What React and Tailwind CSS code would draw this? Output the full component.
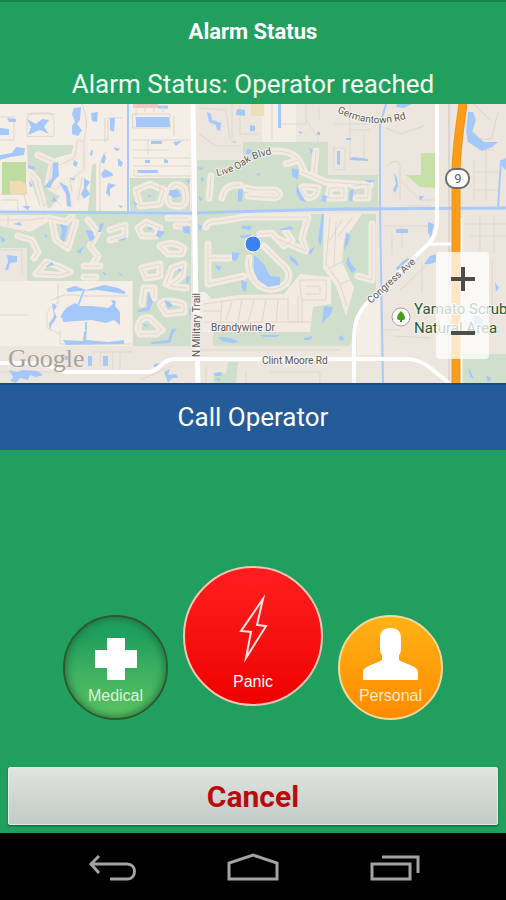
import React from "react";

const parks = [
  "27,145 75,145 75,153 62,156 50,160 56,178 48,190 60,196 50,208 40,207 28,172",
  "92,165 96,163 96,211 88,211",
  "130,178 190,178 190,211 130,211",
  "0,214 130,214 191,214 191,346 133,346 133,281 27,281 27,248 0,248",
  "197,160 243,160 243,142 328,142 328,175 378,175 378,211 197,211",
  "197,214 376,214 376,290 362,310 350,346 213,346 213,300 205,292 197,292",
  "228,362 238,362 236,383 214,383 214,373 226,373",
  "461,354 506,354 506,383 461,383",
  "340,318 351,322 348,346 340,346",
];

// built-up areas inside the parks
const blocks = [
  "202,300 240,295 284,294 300,274 331,277 331,304 313,307 310,332 202,332",
  "324,214 362,214 344,240 342,262 354,288 346,316 336,286 323,268",
  "0,215 46,215 48,222 30,232 20,230 0,226",
];

// streets that run through the green parts, drawn as a wide casing with a thin centre
const streets = [
  "M38 155 L60 165 L74 158 L78 140 L84 142 L84 170 L70 180 L72 192",
  "M30 172 L37 180 L44 206",
  "M52 165 L48 185 L56 190 L62 182 L72 206",
  "M82 178 L78 200",
  "M136 190 L140 206 L160 204 L164 190 L150 184 L136 190",
  "M168 196 Q172 178 184 188 Q190 208 176 206 Q166 206 168 196",
  "M18 236 L32 240 L38 252 L34 258 M48 218 L66 222 L72 216 M52 222 L56 240 L68 248 L76 222",
  "M88 220 L98 232 L90 246 L98 256 L94 262",
  "M110 230 L125 225 V236 L110 240",
  "M138 228 L146 222 L160 228 L156 236 L142 236 Z",
  "M168 218 H188 M176 226 H188",
  "M36 274 L46 262 L58 266 L70 272 L60 275 L38 274",
  "M84 266 H100 M84 277 H96",
  "M160 246 Q172 240 184 248 L182 254 L168 254 Z",
  "M142 268 L160 264 L160 276 L146 278 Z",
  "M166 284 L172 268 L184 264 L182 276 L170 286 L186 288",
  "M142 304 L144 288 L154 288 L154 298",
  "M160 304 Q164 298 184 304 L184 312 L166 314 Z",
  "M138 330 Q138 316 150 318 L162 330 L156 334 L140 334",
  "M211 176 L209 198",
  "M222 198 Q224 184 240 185",
  "M246 188 L256 190 L276 190 Q284 196 274 198 L248 196",
  "M272 151 Q294 150 300 162 L304 170 M286 164 L298 160",
  "M316 151 L314 172 M302 172 L326 182 L370 185",
  "M302 192 Q298 186 308 187 L318 188 Q316 200 306 197 Z",
  "M330 188 H344 V198 H328 Z",
  "M354 186 L368 184 V198 H356",
  "M206 227 Q206 221 220 221 L245 217 L308 217 L302 238 L306 251 L294 246 L276 238",
  "M260 234 L272 233 L284 246 L292 240 L286 232",
  "M208 244 V284 L244 276 M208 258 H230",
  "M249 258 Q246 272 258 285 Q272 294 286 284 Q294 272 280 262 L264 246",
  "M372 224 V280 L358 276",
];

const lanes = [
  "M0 117 H14 V140 H0 M28 114 H54 M27 136 V118 Q28 112 40 113 H50 Q54 114 54 124 V136 Z",
  "M82 104 Q90 120 84 140 M105 118 V142 M90 140 H108 V118 H122 M106 152 Q98 160 100 178 V211",
  "M133 114 H170 V128 H133 Z M133 140 H190 M133 150 H168 M134 158 H190 M134 166 H190 M136 120 V104 M145 112 V106 M154 112 V106 M163 112 V106",
  "M148 140 V154 M174 116 V136 M134 170 V176 H190 M160 178 V192",
  "M0 194 L24 194 L28 211 M2 200 H18 V211 M44 206 L52 196 L62 206",
  "M58 284 V304 M48 310 L58 302 M47 312 V328 L60 334 M60 330 V344 H130 M52 300 Q64 292 82 296 H128",
  "M0 315 H27 M0 250 H22 V274 M100 352 V366 M113 352 V370 M120 352 V370 M92 352 H132",
  "M0 220 H30 L44 218 M8 214 V226",
  "M199 134 L216 146 H240 M199 108 L226 110 L230 140 M232 104 V142 M240 106 V134 H258 M272 104 V140 M280 104 V124 H306 V104 M306 120 L318 138 M319 106 V120",
  "M318 144 V140 M334 148 H345 V170 H334 Z M350 104 V130 H370 M334 124 H378 M350 130 V158 M364 134 V158",
  "M386 128 L400 134 L424 126 M388 165 Q394 158 400 164 V200 M400 180 L420 200 H436 M408 206 H430",
  "M470 128 Q480 144 492 138 L498 112 M474 104 L490 120 M478 150 H494 M474 160 V200 M486 150 V200 M474 172 H498 M474 190 H498",
  "M384 226 H436 M392 234 V254 M402 226 V248 M466 224 H506 M480 216 V252 M494 216 V252 M470 236 H506 M492 260 V320",
  "M330 218 L326 264 L340 284 L347 306 M336 222 L334 266 M342 220 L330 240 M352 218 L338 236 M330 268 L342 262 M340 284 L350 280",
  "M400 290 L430 262 M422 262 V292 M384 330 H400 M394 336 L430 338",
  "M200 350 H340 M270 372 H320 V383 M206 366 V383 M246 372 V383 M0 372 H60 M140 380 L172 366",
  "M204 304 L240 299 L286 299 M204 311 H220 M222 302 L220 328 M232 302 L226 320 M242 300 L238 322 M254 300 L248 322 M266 300 L262 322 M278 300 L276 322 M204 322 H310 M288 298 V322 H298 V296",
  "M300 280 H326 V300 H302 Z M306 286 H320 V294 H306 M302 300 V322",
];

const waters = [
  "74,108 81,107 80,120 77,124 82,130 78,136 72,134 72,126 75,122 72,114",
  "91,113 98,112 97,122 92,121",
  "110,118 115,118 114,132 110,130",
  "27,119 36,124 42,119 49,120 44,127 49,134 40,130 35,132 28,135 31,127",
  "0,128 9,129 9,135 0,135",
  "7,118 16,119 16,122 9,122",
  "136,117 169,117 170,127 136,127",
  "0,155 12,153 16,147 25,148 24,155 10,157 0,160",
  "151,141 162,141 162,144 151,144",
  "173,142 182,141 176,146",
  "137,170 158,170 158,173 138,173",
  "164,159 168,160 168,163 164,163",
  "145,160 150,160 150,163 145,163",
  "53,163 58,162 59,176 54,180 50,188 44,187 52,178",
  "59,182 67,186 70,194 71,207 67,206 66,194",
  "84,178 90,182 86,188 90,194 84,199 81,194 84,188",
  "104,153 106,158 104,164 101,162",
  "74,160 78,163 76,167 73,165",
  "118,158 123,163 121,167 118,165",
  "105,169 112,173 113,176 103,178 101,174",
  "108,183 116,185 110,189 110,197 106,193",
  "91,150 93,150 92,156 90,155",
  "114,147 120,149 118,151 115,150",
  "28,165 35,167 34,170 28,168",
  "54,196 57,202 52,201",
  "29,180 33,186 30,187",
  "69,178 75,178 74,181",
  "22,206 30,206 28,210",
  "118,205 123,206 121,208",
  "170,190 178,190 181,196 174,198 169,195",
  "132,201 138,204 135,206",
  "146,195 151,195 151,198",
  "186,180 190,179 189,184",
  "60,224 68,226 64,242 60,239 62,230",
  "86,230 92,231 95,238 90,242",
  "100,224 104,223 101,232 98,232",
  "118,240 127,237 125,240 120,241",
  "13,224 20,222 22,226",
  "44,233 48,236 46,238",
  "158,230 165,232 160,238 156,236",
  "182,227 190,226 190,234 184,233",
  "147,227 153,228 150,230",
  "0,236 6,240 2,243",
  "7,255 17,256 17,262 10,263 8,270 5,270 8,262",
  "76,252 84,246 80,254",
  "45,267 52,262 54,265",
  "102,272 106,273 105,276",
  "118,273 122,274 121,276",
  "66,289 75,286 86,290 104,285 118,288 126,292 124,294 98,290 80,291 68,292",
  "62,314 66,308 75,303 80,306 92,306 108,308 113,304 111,300 116,301 115,306 120,312 120,325 114,320 106,323 92,320 76,321 64,322 60,318",
  "52,303 57,306 54,311 57,318 52,324 50,330 49,324 54,316",
  "63,340 83,341 84,332 87,330 86,340 108,342 124,340 124,344 66,345",
  "88,356 92,356 92,366 88,366",
  "103,356 108,356 108,366 103,366",
  "64,356 71,356 70,360 64,360",
  "9,370 17,372 22,370 38,371 43,375 36,377 30,375 28,380 20,378 16,383 10,381 13,377",
  "154,364 163,363 161,367 154,367",
  "164,372 170,369 168,375 176,374 178,378 172,378 168,383 166,377",
  "148,292 153,302 149,311 138,312 138,310 147,307",
  "164,300 170,302 173,306 168,308",
  "142,323 148,325 146,327",
  "178,268 182,270 179,273",
  "150,342 168,340 172,329 177,328 173,334 170,343 152,344",
  "187,276 190,277 188,284 186,282",
  "189,308 191,310 190,320",
  "207,112 211,114 212,120 221,123 220,131 217,130 216,125 209,122",
  "237,109 245,110 245,116 236,115",
  "250,125 255,126 255,131 250,131",
  "278,104 281,104 281,128 278,128",
  "247,149 253,150 250,154 246,154",
  "292,168 299,170 298,180 292,176",
  "297,184 300,192 306,202 300,200 296,192",
  "337,151 340,151 340,165 337,164",
  "322,195 327,196 326,202 322,201",
  "238,190 243,189 242,201 238,202",
  "309,148 313,150 311,154",
  "198,167 204,168 200,170",
  "201,177 204,178 202,184",
  "198,196 203,199 200,201",
  "317,132 320,132 320,135 317,135",
  "298,131 303,132 300,134",
  "233,141 237,142 234,143",
  "256,174 260,173 259,176",
  "241,226 252,226 250,230 243,229",
  "239,236 252,234 250,237 242,238",
  "278,230 290,226 294,229 286,230",
  "198,224 202,226 200,232",
  "322,214 324,214 322,240 320,246 318,240",
  "346,232 350,236 348,244 344,250",
  "254,255 264,264 270,276 280,277 280,285 268,287 258,280 254,270",
  "232,252 240,253 236,261 232,260",
  "215,265 222,267 218,271",
  "241,280 247,282 246,292 242,290",
  "290,255 298,262 299,267 290,260",
  "310,250 315,246 311,254 308,253",
  "322,322 324,306 333,307 331,314 326,319 323,323",
  "218,337 230,338 240,342 232,343 222,341",
  "260,335 280,335 276,337 264,337",
  "304,338 313,336 310,340 304,340",
  "338,338 344,335 342,339",
  "214,373 222,372 221,376 215,376",
  "215,379 220,378 220,381",
  "397,104 412,104 404,108 396,107",
  "350,158 354,157 368,159 368,161 350,160",
  "394,173 397,178 398,186 395,193 393,190 396,184",
  "419,196 424,196 420,201",
  "350,190 354,189 352,202 349,200",
  "346,138 351,138 351,140 346,140",
  "364,180 376,180 370,183",
  "468,112 473,112 476,120 472,132 484,142 498,142 492,147 482,151 468,142 466,132",
  "502,160 506,158 506,170 501,166",
  "396,229 408,229 408,233 396,233",
  "428,222 434,224 431,238 428,232",
  "396,268 402,262 408,258 412,262 406,264 402,268 398,272",
  "424,264 430,256 436,254 436,262 430,264",
  "348,256 350,262 356,270 352,273 346,264",
  "339,336 345,339 340,341",
  "468,368 471,372 474,379 470,377",
  "486,376 492,378 488,382",
  "474,314 484,320 478,330 474,322",
  "495,282 499,288 496,292",
];

const roads = [
  { d: "M0 363 L40 363 L66 372 H148 C160 372 160 360 174 359 L194 359 H406 C424 359 432 370 450 384", w: 4 },
  { d: "M437 104 V218 C437 232 434 240 424 248 L370 300 C358 312 354 322 354 340 V383", w: 4 },
  { d: "M430 244 H451", w: 3 },
  { d: "M461 218 V383", w: 3 },
  { d: "M193 104 L196 310 L198 383", w: 5 },
];

function MapView() {
  return (
    <svg
      viewBox="0 104 506 279"
      preserveAspectRatio="xMidYMid slice"
      className="block h-[279px] w-full"
      role="img"
      aria-label="Map of your location"
    >
      <defs>
        <path id="germantown" d="M337 112 Q374 132 414 116" />
        <path id="liveoak" d="M217 176 Q234 173 246 164 Q258 156 280 153" />
        <path id="congress" d="M371 304 L422 257" />
      </defs>
      <rect x="0" y="104" width="506" height="279" fill="#ece6df" />
      <path d="M0 104 H191 V214 H0 Z M0 281 H132 V346 H0 Z M197 214 H376 V320 H197 Z M262 104 H296 V142 H262 Z" fill="#f5eee6" />
      <path d="M358 310 L380 290 V355 H357 V330 Z" fill="#f5eee6" />
      {parks.map((p) => (
        <polygon key={p} points={p} fill="#cfdfcb" />
      ))}
      {blocks.map((p) => (
        <polygon key={p} points={p} fill="#f3ebe2" />
      ))}
      <polygon points="2,162 26,162 26,195 2,195" fill="#bfdca0" />
      <polygon points="10,181 22,181 27,186 27,195 10,195" fill="#efdcb4" />
      <polygon points="251,104 264,104 264,116 251,116" fill="#efdfb8" />
      <polygon points="421,153 435,153 435,188 420,187 406,175 421,175" fill="#c5e1a8" />
      <path d="M133 106 H158" stroke="#f3c6c6" strokeWidth="4" />
      <path d="M158 107 H168" stroke="#a9cbfb" strokeWidth="3" />
      <g fill="none" strokeLinejoin="round" strokeLinecap="round">
        {streets.map((d) => (
          <path key={d} d={d} stroke="#f3ebe2" strokeWidth="7" />
        ))}
        {streets.map((d) => (
          <path key={d} d={d} stroke="#e2d8ce" strokeWidth="1" />
        ))}
        {lanes.map((d) => (
          <path key={d} d={d} stroke="#dfd7cd" strokeWidth="1" />
        ))}
      </g>
      {waters.map((p) => (
        <polygon key={p} points={p} fill="#a5c8fb" />
      ))}
      <circle cx="59" cy="321" r="4" fill="#f5eee6" />
      <path d="M0 212 L194 213 L340 209 L506 208" fill="none" stroke="#a9cbfb" strokeWidth="3" />
      <path
        d="M128 104 V212 M386 104 L380 125 V209 L383 383 M501 160 L498 208 M84 290 L78 306 M106 285 V290 M86 322 V330"
        fill="none"
        stroke="#a9cbfb"
        strokeWidth="2"
      />
      <path d="M449 104 V383" stroke="#cbc6c2" strokeWidth="1" />
      {roads.map((r) => (
        <path key={r.d} d={r.d} fill="none" stroke="#ffffff" strokeWidth={r.w} />
      ))}
      <path d="M463 104 C459 134 456 150 456 175 V383" fill="none" stroke="#ec9420" strokeWidth="9" />
      <path d="M463 104 C459 134 456 150 456 175 V383" fill="none" stroke="#fc9c18" strokeWidth="7" />
      <rect x="446" y="169" width="23" height="19" rx="9" fill="#ffffff" stroke="#6d6d6d" strokeWidth="2" />
      <g
        fill="#5c5956"
        stroke="#f7f3ee"
        strokeWidth="2"
        strokeLinejoin="round"
        paintOrder="stroke"
        className="font-['Roboto',sans-serif] text-[10px]"
      >
        <text x="458" y="183" textAnchor="middle" strokeWidth="0" className="text-[13px]">9</text>
        <text><textPath href="#germantown">Germantown Rd</textPath></text>
        <text><textPath href="#liveoak">Live Oak Blvd</textPath></text>
        <text><textPath href="#congress">Congress Ave</textPath></text>
        <text x="211" y="331">Brandywine Dr</text>
        <text x="262" y="364">Clint Moore Rd</text>
        <text transform="translate(200 357) rotate(-90)">N Military Trail</text>
      </g>
      <g
        fill="#2c5a33"
        stroke="#f7f3ee"
        strokeWidth="2"
        paintOrder="stroke"
        className="font-['Roboto',sans-serif] text-[15px]"
      >
        <text x="414" y="314">Yamato Scrub</text>
        <text x="414" y="333">Natural Area</text>
      </g>
      <circle cx="401" cy="317" r="9" fill="#ffffff" stroke="#a7a19b" strokeWidth="1" />
      <path d="M401 311 C403 313 405 315 405 318 C405 320 403 320 402 320 V322 H400 V320 C399 320 397 320 397 318 C397 315 399 313 401 311 Z" fill="#43a01b" />
      <circle cx="253" cy="244" r="8" fill="#3c7ff0" stroke="#ffffff" strokeWidth="1" />
      <text
        x="8"
        y="367"
        fill="#a8a29c"
        stroke="#f3eee8"
        strokeWidth="1"
        paintOrder="stroke"
        className="font-['Liberation_Serif',serif] text-[26px]"
      >
        Google
      </text>
    </svg>
  );
}

function ZoomControl() {
  return (
    <div className="absolute right-[17px] bottom-6 flex w-[53px] flex-col rounded-sm bg-white/75">
      <button type="button" aria-label="Zoom in" className="flex h-[54px] items-center justify-center">
        <svg className="h-6 w-6" viewBox="0 0 24 24" fill="none" stroke="#4d4d4d" strokeWidth="4">
          <path d="M0 12 H24 M12 0 V24" />
        </svg>
      </button>
      <button type="button" aria-label="Zoom out" className="flex h-[53px] items-center justify-center">
        <svg className="h-6 w-6" viewBox="0 0 24 24" fill="none" stroke="#4d4d4d" strokeWidth="4">
          <path d="M0 12 H24" />
        </svg>
      </button>
    </div>
  );
}

function AlarmButtons() {
  return (
    <div className="flex items-end justify-center gap-[15px] pb-[47px] font-['Liberation_Sans',sans-serif] text-base leading-4 text-white">
      <button
        type="button"
        className="flex h-[105px] w-[105px] flex-col items-center justify-end gap-2 rounded-full border-2 border-[#31562d] bg-linear-to-b from-[#20a05e] from-20% to-[#5cc562] pb-[14px] text-[#d9f5d6] shadow-[inset_0_0_8px_1px_#1d6f3c]"
      >
        <svg className="h-[42px] w-[42px]" viewBox="0 0 42 42" fill="#ffffff">
          <path d="M12 0 H30 V12 H42 V30 H30 V42 H12 V30 H0 V12 H12 Z" />
        </svg>
        Medical
      </button>
      <button
        type="button"
        className="mb-[14px] flex h-[140px] w-[140px] flex-col items-center justify-end gap-2 rounded-full border-2 border-[#f4c4b4] bg-linear-to-b from-[#ff1d1d] to-[#ee0000] pb-[14px]"
      >
        <svg
          className="h-[72px] w-[30px]"
          viewBox="0 0 30 72"
          fill="none"
          stroke="#ffe3e0"
          strokeWidth="2"
          strokeMiterlimit="10"
        >
          <path d="M25 5 L19 31 L28 32 L8 64 L13 38 L3 37 Z" />
        </svg>
        Panic
      </button>
      <button
        type="button"
        className="flex h-[105px] w-[105px] flex-col items-center justify-end gap-2 rounded-full border-2 border-[#f3d9a0] bg-linear-to-b from-[#ffb215] to-[#ff8a00] pb-[14px] text-[#ffe9c4]"
      >
        <svg className="h-[52px] w-[55px]" viewBox="0 0 55 52" fill="#ffffff">
          <path d="M27 0 C35 0 38 4 38 10 V21 C38 24 37 26 36 27 V32 C42 36 55 38 55 44 V52 H0 V44 C0 38 13 36 19 32 V27 C18 26 17 24 17 21 V10 C17 4 20 0 27 0 Z" />
        </svg>
        Personal
      </button>
    </div>
  );
}

function NavigationBar() {
  return (
    <nav className="bg-black">
      <div className="mx-auto grid h-[67px] w-5/6 grid-cols-3 place-items-center">
        <button type="button" aria-label="Back">
          <svg className="h-7 w-[52px]" viewBox="0 0 52 28" fill="none" stroke="#a3a3a3" strokeWidth="3">
            <path d="M13 3 L5 11 L13 20 M5 11 H41 C51 11 51 26 41 26 H24" />
          </svg>
        </button>
        <button type="button" aria-label="Home">
          <svg className="h-7 w-[52px]" viewBox="0 0 52 28" fill="none" stroke="#a3a3a3" strokeWidth="3">
            <path d="M2 26 V10 L26 2 L50 10 V26 Z" />
          </svg>
        </button>
        <button type="button" aria-label="Recent apps">
          <svg className="h-7 w-[52px]" viewBox="0 0 52 28" fill="none" stroke="#a3a3a3" strokeWidth="3">
            <path d="M4 11 H42 V26 H4 Z M14 4 H50 V20" />
          </svg>
        </button>
      </div>
    </nav>
  );
}

export default function App() {
  return (
    <div className="flex min-h-screen flex-col bg-[#219f5f] font-['Roboto',sans-serif]">
      <header className="border-t-2 border-[#17824a] text-center text-white">
        <h1 className="pt-[14px] text-[22px] leading-8 font-bold">Alarm Status</h1>
        <p className="pt-5 pb-1 text-[26px] leading-8 text-[#f0fff0]">Alarm Status: Operator reached</p>
      </header>

      <div className="relative overflow-hidden">
        <MapView />
        <ZoomControl />
      </div>

      <button type="button" className="h-[67px] border-t-2 border-[#0f4c8e] bg-[#245c99] text-[26px] text-white">
        Call Operator
      </button>

      <main className="flex flex-1 flex-col justify-end">
        <AlarmButtons />
        <div className="px-2 pb-2">
          <button
            type="button"
            className="h-[58px] w-full rounded-xs border border-[#e6ece8] bg-linear-to-b from-[#dfe5e1] to-[#c3cbc7] text-[30px] font-bold text-[#b90a0c] shadow-[0_1px_2px_#0d5c33]"
          >
            Cancel
          </button>
        </div>
      </main>

      <NavigationBar />
    </div>
  );
}
